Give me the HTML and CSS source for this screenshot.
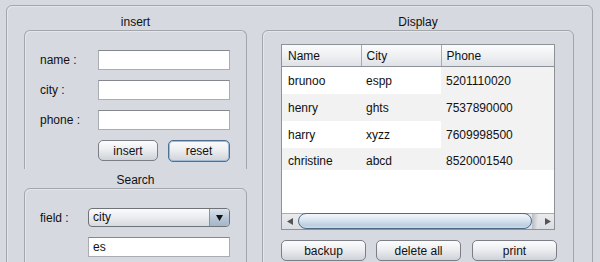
FILE: index.html
```html
<!DOCTYPE html>
<html lang="en">

<head>
    <meta charset="UTF-8">
    <meta name="viewport" content="width=device-width, initial-scale=1.0">
    <title>Students</title>
    <link rel="stylesheet" href="styles.css">
</head>

<body>
    <div class="frame">

        <div class="left-col">
            <div class="group-title">insert</div>
            <div class="group insert-group">
                <div class="form-grid">
                    <label for="name">name :</label>
                    <input id="name" class="field" type="text">

                    <label for="city">city :</label>
                    <input id="city" class="field" type="text">

                    <label for="phone">phone :</label>
                    <input id="phone" class="field" type="text">
                </div>

                <div class="button-row">
                    <button class="btn insert-btn">insert</button>
                    <button class="btn reset-btn">reset</button>
                </div>
            </div>

            <div class="group-title search-title">Search</div>
            <div class="group search-group">
                <div class="form-grid search-grid">
                    <label>field :</label>
                    <div class="combo">
                        <span class="combo-text">city</span>
                        <span class="combo-arrow">
                            <svg width="7" height="6" viewBox="0 0 7 6"><path d="M0 0H7L3.5 6Z" fill="#111" /></svg>
                        </span>
                    </div>

                    <span></span>
                    <input class="field" type="text" value="es">
                </div>
            </div>
        </div>

        <div class="right-col">
            <div class="group-title">Display</div>
            <div class="group display-group">
                <div class="table-box">
                    <table>
                        <colgroup>
                            <col class="col-name">
                            <col class="col-city">
                            <col>
                        </colgroup>
                        <thead>
                            <tr>
                                <th>Name</th>
                                <th>City</th>
                                <th>Phone</th>
                            </tr>
                        </thead>
                        <tbody>
                            <tr>
                                <td>brunoo</td>
                                <td>espp</td>
                                <td class="phone">5201110020</td>
                            </tr>
                            <tr class="alt">
                                <td>henry</td>
                                <td>ghts</td>
                                <td class="phone">7537890000</td>
                            </tr>
                            <tr>
                                <td>harry</td>
                                <td>xyzz</td>
                                <td class="phone">7609998500</td>
                            </tr>
                            <tr class="alt short">
                                <td>christine</td>
                                <td>abcd</td>
                                <td class="phone">8520001540</td>
                            </tr>
                        </tbody>
                    </table>
                    <div class="table-fill"></div>

                    <div class="hscroll">
                        <span class="scroll-btn">
                            <svg width="6" height="7" viewBox="0 0 6 7"><path d="M0 3.5L6 0V7Z" fill="#555" /></svg>
                        </span>
                        <span class="scroll-thumb"></span>
                        <span class="scroll-btn scroll-right">
                            <svg width="6" height="7" viewBox="0 0 6 7"><path d="M6 3.5L0 0V7Z" fill="#555" /></svg>
                        </span>
                    </div>
                </div>

                <div class="action-row">
                    <button class="btn action-btn">backup</button>
                    <button class="btn action-btn">delete all</button>
                    <button class="btn action-btn print-btn">print</button>
                </div>
            </div>
        </div>

    </div>
</body>

</html>
```

FILE: styles.css
```css
body {
    margin: 0;
    background-color: #d6d9df;
    font-family: "Liberation Sans", Arial, sans-serif;
    font-size: 12px;
    color: #111;
    overflow: hidden;
}

.frame {
    display: flex;
    gap: 15px;
    box-sizing: border-box;
    width: 587px;
    height: 300px;
    margin: 5px 0 0 6px;
    padding-left: 17px;
    border: 1px solid #a3a6ab;
    border-radius: 6px;
    box-shadow: inset 1px 1px 0 #e4e6ea;
}

.left-col {
    width: 223px;
}

.right-col {
    width: 312px;
}

.group-title {
    box-sizing: border-box;
    height: 24px;
    padding-top: 9px;
    line-height: 15px;
    text-align: center;
}

.search-title {
    height: 19px;
    padding-top: 4px;
}

.group {
    box-sizing: border-box;
    border: 1px solid #a3a6ab;
    border-radius: 6px;
    box-shadow: inset 1px 1px 0 #e4e6ea;
}

.insert-group {
    height: 139px;
    padding: 19px 0 0 15px;
    border-bottom: none;
    border-radius: 6px 6px 0 0;
}

.search-group {
    height: 90px;
    padding: 19px 0 0 15px;
}

.display-group {
    height: 240px;
    padding: 13px 0 0 18px;
}

.form-grid {
    display: grid;
    grid-template-columns: 58px 132px;
    row-gap: 10px;
    align-items: center;
}

.search-grid {
    grid-template-columns: 48px 142px;
}

.field {
    box-sizing: border-box;
    width: 100%;
    height: 20px;
    margin: 0;
    padding: 0 4px;
    border: 1px solid #a9acb0;
    border-top-color: #85888c;
    background-color: white;
    font-family: inherit;
    font-size: 12px;
    color: #111;
}

.button-row {
    display: flex;
    gap: 10px;
    margin-top: 10px;
    padding-left: 58px;
}

.btn {
    box-sizing: border-box;
    height: 21px;
    padding: 0;
    border: 1px solid #7b7f85;
    border-radius: 5px;
    background: linear-gradient(#fcfcfd, #eceef1 45%, #d9dce1 80%, #cfd3d8);
    font-family: inherit;
    font-size: 12px;
    color: #111;
}

.insert-btn {
    width: 60px;
}

.reset-btn {
    width: 62px;
    height: 22px;
    border-color: #4f6f90;
    box-shadow: inset 0 0 0 1px #9fbad6;
}

.combo {
    display: flex;
    box-sizing: border-box;
    height: 19px;
    border: 1px solid #6f7378;
    border-radius: 4px;
    background: linear-gradient(#fbfbfc, #eceef1 45%, #d7dadf);
    overflow: hidden;
}

.combo-text {
    flex: 1;
    padding-left: 4px;
    line-height: 17px;
}

.combo-arrow {
    display: flex;
    align-items: center;
    justify-content: center;
    width: 19px;
    border-left: 1px solid #8593a3;
    background: linear-gradient(#dbe3ec, #b7c6d6 55%, #a4b6c9);
}

.table-box {
    display: flex;
    flex-direction: column;
    box-sizing: border-box;
    width: 274px;
    height: 186px;
    border: 1px solid #8e9196;
    background-color: white;
}

table {
    width: 100%;
    border-collapse: collapse;
    table-layout: fixed;
}

.col-name {
    width: 79px;
}

.col-city {
    width: 80px;
}

th {
    height: 21px;
    padding: 0 0 0 5px;
    border-right: 1px solid #a8abb0;
    border-bottom: 1px solid #8e9196;
    background: linear-gradient(#fbfbfc, #eef0f2 50%, #dfe2e6);
    font-weight: normal;
    text-align: left;
}

th:last-child {
    border-right: none;
}

td {
    height: 26px;
    padding: 1px 0 0 5px;
    white-space: nowrap;
}

td:first-child,
th:first-child {
    padding-left: 6px;
}

.short td {
    height: 19px;
    padding-top: 3px;
}

.alt td,
td.phone {
    background-color: #f2f2f2;
}

.table-fill {
    flex: 1;
}

.hscroll {
    display: flex;
    align-items: stretch;
    height: 15px;
    border-top: 1px solid #a8abb0;
    background: linear-gradient(#e9ebee, #dadde2);
}

.scroll-btn {
    display: flex;
    align-items: center;
    justify-content: center;
    width: 16px;
}

.scroll-right {
    flex: 1;
    justify-content: flex-end;
    padding-right: 3px;
    background: linear-gradient(90deg, #b9bcc1, #e3e5e9 6px, transparent 7px);
}

.scroll-thumb {
    box-sizing: border-box;
    width: 234px;
    margin-top: -1px;
    border: 1px solid #4f6a85;
    border-radius: 8px;
    background: linear-gradient(#f3f7fb, #d8e4ef 45%, #bccfe1 80%, #c9d9e8);
}

.action-row {
    display: flex;
    gap: 10px;
    margin-top: 10px;
}

.action-btn {
    width: 85px;
}

.print-btn {
    margin-left: 1px;
}
```
